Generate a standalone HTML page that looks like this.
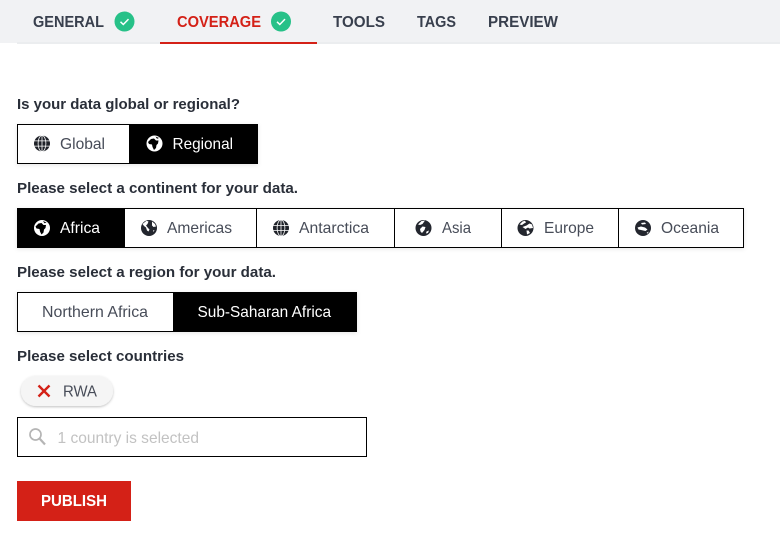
<!DOCTYPE html>
<html><head><meta charset="utf-8"><title>Coverage</title>
<style>
html,body{margin:0;padding:0;background:#fff;width:780px;height:543px;overflow:hidden}
svg{display:block}
text{font-family:"Liberation Sans",sans-serif;font-size:16px}
.tab{font-weight:700;font-size:15.5px;fill:#383f4d}
.lab{font-weight:700;font-size:15px;fill:#2a2f39}
.btn{fill:#474c58;font-size:16px}
.w{fill:#fff;font-size:16px}
</style></head><body>
<svg width="780" height="543" viewBox="0 0 780 543" xmlns="http://www.w3.org/2000/svg">
<defs>
<filter id="s" x="-5%" y="-20%" width="110%" height="150%"><feDropShadow dx="0" dy="1" stdDeviation="2" flood-color="#000" flood-opacity=".1"/></filter>
<filter id="c" x="-20%" y="-30%" width="140%" height="170%"><feDropShadow dx="0" dy="1" stdDeviation="1.2" flood-color="#000" flood-opacity=".25"/></filter>
<g id="grid"><circle r="8" fill="#1f2229"/><path d="M-8-2.6H8M-8 2.6H8M0-8V8" stroke="#fff" stroke-width=".8" fill="none"/><ellipse rx="3.9" ry="8" fill="none" stroke="#fff" stroke-width=".8"/></g>
<g id="am"><circle r="8" fill="#23262e"/><path d="M-6.500-4-2.500-7.300-.5-6.500-1.500-4-3-2.500-1 0 .5 1.500-.5 3.500-2 2.500-3-.5-5-2zM3-6.500 6-4 7-1.500 4.500-1 3-2.500zM4 2.500 5.500 2 4.500 4z" fill="#fff"/></g>
<g id="af"><circle r="8" fill="#fff"/><path d="M-6.500-1.500-3.500-4.500-.5-5 1.500-3 4-3 3.500 0 2 1.500 1.500 4.500-.5 6.500-2 3.500-2.500 1-5.500 .5z" fill="#000"/><path d="M1-7 4.500-5.500 2.500-4.800z" fill="#000"/></g>
<g id="as"><circle r="8" fill="#23262e"/><path d="M-5.500-3.500-2-7 1.500-7.500-1-4-3.500-3zM-3.500 1-1-1.500 2-1 1 2-1.500 5-3 3.500zM3 3.500 5.500 2.500 4.500 5 2.500 5.500z" fill="#fff"/></g>
<g id="eu"><circle r="8" fill="#23262e"/><path d="M-6-3.500-3-6.500-.5-7.300 .5-5.500-1.500-4.500-3.500-3zM-3-1 1-2.500 4-4.500 6.500-3.500 7.500 0 4 .5 2.500-.5 0 1zM1 2.500 3 2.500 4.500 5 1.500 6.500z" fill="#fff"/></g>
<g id="oc"><circle r="8" fill="#23262e"/><path d="M-2-5 2-5.500 3-4-1-3.500zM-5.500-.5-2-1.500 2-.5 4.500 1.500 2.500 3-2 2-4.500 1.500zM3.500 5 5.500 3.500 5 5.500z" fill="#fff"/></g>
<g id="ck"><circle r="10" fill="#27c188"/><path d="M-4 .3-1.200 3 4-2.400" fill="none" stroke="#fff" stroke-width="1.500"/></g>
</defs>

<rect x="0" y="0" width="780" height="43" fill="#f1f2f4"/>
<rect x="17" y="42" width="763" height="2" fill="#ebedef"/>
<rect x="160" y="42" width="157" height="2" fill="#d42117"/>
<text class="tab" x="33" y="27" textLength="71" lengthAdjust="spacingAndGlyphs">GENERAL</text>
<use href="#ck" x="124.500" y="21.500"/>
<text class="tab" x="177" y="27" textLength="84" lengthAdjust="spacingAndGlyphs" style="fill:#d42117">COVERAGE</text>
<use href="#ck" x="281" y="21.500"/>
<text class="tab" x="333" y="27" textLength="52" lengthAdjust="spacingAndGlyphs">TOOLS</text>
<text class="tab" x="417" y="27" textLength="39" lengthAdjust="spacingAndGlyphs">TAGS</text>
<text class="tab" x="488" y="27" textLength="70" lengthAdjust="spacingAndGlyphs">PREVIEW</text>

<text class="lab" x="17" y="109" textLength="223" lengthAdjust="spacingAndGlyphs">Is your data global or regional?</text>
<rect x="17.500" y="124.500" width="240" height="39" fill="#fff" stroke="#000" filter="url(#s)"/>
<rect x="129" y="124" width="129" height="40" fill="#000"/>
<use href="#grid" x="42" y="143.500"/>
<text class="btn" x="60" y="149" textLength="45" lengthAdjust="spacingAndGlyphs">Global</text>
<use href="#af" x="154.500" y="143.500"/>
<text class="w" x="172.500" y="149" textLength="60.500" lengthAdjust="spacingAndGlyphs">Regional</text>

<text class="lab" x="17" y="193" textLength="281" lengthAdjust="spacingAndGlyphs">Please select a continent for your data.</text>
<rect x="17.500" y="208.500" width="726" height="39" fill="#fff" stroke="#000" filter="url(#s)"/>
<rect x="17" y="208" width="108" height="40" fill="#000"/>
<path d="M256.500 208v40M394.500 208v40M501.500 208v40M618.500 208v40" stroke="#000"/>
<use href="#af" x="42" y="228"/>
<text class="w" x="60" y="233" textLength="40" lengthAdjust="spacingAndGlyphs">Africa</text>
<use href="#am" x="149" y="228"/>
<text class="btn" x="167" y="233" textLength="65" lengthAdjust="spacingAndGlyphs">Americas</text>
<use href="#grid" x="281" y="228"/>
<text class="btn" x="299" y="233" textLength="70" lengthAdjust="spacingAndGlyphs">Antarctica</text>
<use href="#as" x="423.500" y="228"/>
<text class="btn" x="442" y="233" textLength="29" lengthAdjust="spacingAndGlyphs">Asia</text>
<use href="#eu" x="525.500" y="228"/>
<text class="btn" x="544" y="233" textLength="50" lengthAdjust="spacingAndGlyphs">Europe</text>
<use href="#oc" x="643" y="228"/>
<text class="btn" x="661" y="233" textLength="58" lengthAdjust="spacingAndGlyphs">Oceania</text>

<text class="lab" x="17" y="277" textLength="259" lengthAdjust="spacingAndGlyphs">Please select a region for your data.</text>
<rect x="17.500" y="292.500" width="339" height="39" fill="#fff" stroke="#000" filter="url(#s)"/>
<rect x="173" y="292" width="184" height="40" fill="#000"/>
<text class="btn" x="42" y="317" textLength="106" lengthAdjust="spacingAndGlyphs">Northern Africa</text>
<text class="w" x="197.500" y="317" textLength="133.500" lengthAdjust="spacingAndGlyphs">Sub-Saharan Africa</text>

<text class="lab" x="17" y="361" textLength="167" lengthAdjust="spacingAndGlyphs">Please select countries</text>
<rect x="21" y="376" width="92" height="30" rx="15" fill="#f5f5f5" filter="url(#c)"/>
<path d="M38.500 385.500 49.500 396.500M49.500 385.500 38.500 396.500" stroke="#d42117" stroke-width="2.400" fill="none"/>
<text class="btn" x="63" y="396.500" textLength="34" lengthAdjust="spacingAndGlyphs">RWA</text>

<rect x="17.500" y="417.500" width="349" height="39" fill="#fff" stroke="#000"/>
<circle cx="35.500" cy="434.500" r="5.500" fill="none" stroke="#b5b5b5" stroke-width="1.700"/>
<path d="M39.500 438.500 45 444.500" stroke="#b5b5b5" stroke-width="2.200" fill="none"/>
<text x="57.500" y="443" textLength="141.500" lengthAdjust="spacingAndGlyphs" style="fill:#c2c2c2">1 country is selected</text>

<rect x="17" y="481" width="114" height="40" fill="#d42117"/>
<text x="41" y="506" textLength="66" lengthAdjust="spacingAndGlyphs" style="fill:#fff;font-weight:700;font-size:15.5px">PUBLISH</text>
</svg>
</body></html>
